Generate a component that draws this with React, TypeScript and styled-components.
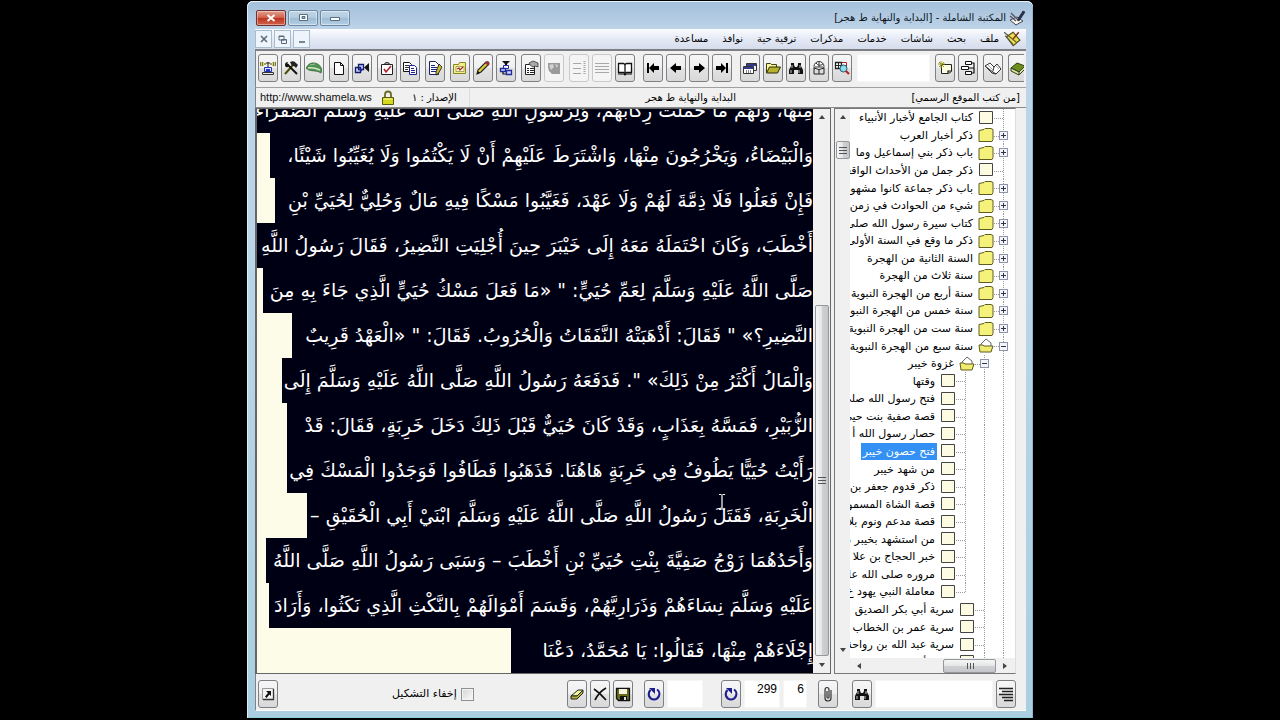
import React, { ReactNode } from 'react';
import styled, { createGlobalStyle, css } from 'styled-components';

const uiFont = '"DejaVu Sans", "Liberation Sans", sans-serif';

const GlobalStyle = createGlobalStyle`
  *, *::before, *::after { box-sizing: border-box; }
  body { margin: 0; background: #000; font-family: ${uiFont}; color: #000; }
  button, input { font: inherit; color: inherit; margin: 0; padding: 0; }
  ul { list-style: none; margin: 0; padding: 0; }
`;

/* ---------- icons ---------- */

const line = { fill: 'none', stroke: '#111', strokeWidth: 1.2 };

const glyphs: Record<string, ReactNode> = {
  antenna: (<>
    <path d="M1 2q-1 2 0 4M3 2q-1 2 0 4M13 2q1 2 0 4M15 2q1 2 0 4M5 3v2M11 3v2" fill="none" stroke="#77770a" strokeWidth="1.3" />
    <path d="M8 2v6M6 3h4" stroke="#222" fill="none" />
    <path d="M4.500 7.500h7v4h-7z" fill="#dfe8ff" stroke="#2430b0" /><path d="M6 9h4v2H6z" fill="#2233c8" />
    <path d="M2.500 12.500h11v2h-11z" fill="#eee" stroke="#333" />
  </>),
  tools: (<>
    <path d="M2 14L10 5" stroke="#77771a" strokeWidth="2.4" /><path d="M2 14L10 5" stroke="#111" strokeWidth=".8" />
    <path d="M7 2q4-2 6 1l2 2-2 3-2-2-2 0z" fill="#222" />
    <path d="M4 4l10 10" stroke="#111" strokeWidth="2" /><path d="M2 5q0-3 3-3l-1 2 2 1-1 2q-3 1-3-2" fill="#111" />
  </>),
  leaf: (<>
    <path d="M0 8q3-6 9-5 6 1 7 8l-1 2q-3-2-7-2-6 0-8-3z" fill="#4f9350" stroke="#2f5b30" strokeWidth=".6" />
    <path d="M2 8q5-1 12 2" stroke="#d5e8c8" fill="none" strokeWidth="1.400" />
    <path d="M4 5l5-1" stroke="#9cc48e" fill="none" />
  </>),
  page: <path d="M3.500 2.500h6l3 3v9h-9zM9.500 2.500v3h3" fill="#fff" stroke="#111" />,
  camera: (<>
    <path d="M1.500 7.500h5v5h-5zM4.500 4.500h5v5h-5z" fill="#c6ccff" stroke="#111a66" strokeWidth="1.3" />
    <path d="M15 3v9l-5-4.500z" fill="#111" /><path d="M5 9h4l-2 3z" fill="#2020a0" />
  </>),
  clipboard: (<>
    <path d="M2.500 4.500h11v10h-11z" fill="#fff" stroke="#222" /><path d="M5.500 4.500q0-2 2.500-2t2.500 2z" fill="#bbb" stroke="#222" />
    <path d="M5 9l2 3 5-6" fill="none" stroke="#b3202c" strokeWidth="1.600" />
  </>),
  copy: (<>
    <path d="M1.500 2.500h6l2 2v7h-8z" fill="#fff" stroke="#111" /><path d="M3 5.500h4M3 7.500h4M3 9.500h3" stroke="#333" />
    <path d="M7.500 5.500h5l2 2v7h-7z" fill="#fff" stroke="#1c2590" /><path d="M9 8.500h3M9 10.500h4M9 12.500h4" stroke="#1c2590" />
  </>),
  docedit: (<>
    <path d="M2.500 1.500h6l3 3v10h-9z" fill="#fff" stroke="#1a1f66" /><path d="M4 5.500h4M4 7.500h6M4 9.500h6M4 11.500h5" stroke="#1c2590" />
    <path d="M12 4l3 3-4 7-2 1 0-3z" fill="#cdbb28" stroke="#111" strokeWidth=".8" />
  </>),
  folderchart: (<>
    <path d="M1.500 4.500h5l1-2h6v11h-12z" fill="#f2f08c" stroke="#8a8420" /><path d="M4 6.500h8v5H4z" fill="#fffbe0" stroke="#777020" strokeWidth=".6" />
    <path d="M5 9l2-1 1 2 3-3" fill="none" stroke="#b02818" strokeWidth="1.300" />
  </>),
  pencil: (<>
    <path d="M2 14l1-4 8-8q3-1 3 2l-8 8z" fill="#d8d03a" stroke="#222" strokeWidth="1.100" />
    <path d="M10 3l3 3 1-2q0-3-3-2z" fill="#b02830" /><path d="M2 14l1-3 2 2z" fill="#111" />
  </>),
  nodes: (<>
    <path d="M4 1h8L9 4v2H7V4z" fill="#111" /><path d="M5.500 5.500h5v3h-5z" fill="#fff" stroke="#20289a" />
    <path d="M2.500 8.500h5v3h-5zM8.500 10.500h5v4h-5z" fill="#cfd6ff" stroke="#20289a" strokeWidth="1.300" /><path d="M5 12v2h3" {...line} />
  </>),
  props: (<>
    <path d="M2.500 4.500h9v10h-9z" fill="#fff" stroke="#222" /><path d="M4 8.500h2M7 8.500h4M4 10.500h2M7 10.500h4M4 12.500h2M7 12.500h4" stroke="#222" />
    <path d="M6 3l4-2 5 2v4l-3-1-2 1-3-2z" fill="#aaa" stroke="#333" strokeWidth=".8" />
  </>),
  globe: (<>
    <path d="M2 3h12v11H6l-3-3-1-4z" fill="#9a9a9a" /><path d="M3 5l4-1 1 3-3 3zM9 4l3 1-1 3z" fill="#d2d2d2" />
  </>),
  sortlines: (<>
    <path d="M2 3.500h8M2 8.500h8M2 13.500h8" stroke="#a6a6a6" /><path d="M13.500 1v14" stroke="#a6a6a6" strokeDasharray="1 1" strokeWidth="2" />
  </>),
  lines: <path d="M1 3.500h14M1 6.500h14M1 9.500h14M1 12.500h14" stroke="#a8a8a8" />,
  book: (<>
    <path d="M1.500 3.500h5l1.500 1 1.500-1h5v9h-5l-1.500 1-1.500-1h-5z" fill="#fff" stroke="#111" strokeWidth="1.300" /><path d="M8 4.500v9" stroke="#111" strokeWidth="1.300" />
    <path d="M1 14h6l1 1 1-1h6" {...line} />
  </>),
  first: <path d="M2 3h2v10H2zM4 8l5-5v3h5v4H9v3z" fill="#000" />,
  prev: <path d="M2 8l6-5v3h5v4H8v3z" fill="#000" />,
  next: <path d="M14 8L8 3v3H3v4h5v3z" fill="#000" />,
  last: <path d="M14 3h-2v10h2zM12 8L7 3v3H2v4h5v3z" fill="#000" />,
  windows: (<>
    <path d="M4.500 3.500h10v7h-10z" fill="#eee" stroke="#333" /><path d="M5 4h9v2H5z" fill="#333a8c" />
    <path d="M1.500 6.500h10v7h-10z" fill="#fff" stroke="#333" /><path d="M2 7h9v2H2z" fill="#333a8c" /><path d="M4.500 10v3M6.500 10v3M8.500 10v3" stroke="#888" />
  </>),
  openfolder: (<>
    <path d="M1.500 12.500v-9h4l1 1h5v3" fill="#f7f5a0" stroke="#3f3f10" /><path d="M1.500 13l3-6h11l-3 6z" fill="#b5b32c" stroke="#2a2a08" />
  </>),
  binoculars: (<>
    <path d="M3 3h3v2l1 2h2l1-2V3h3v3l2 4v4h-5v-4H6v4H1v-4l2-4z" fill="#111" />
    <path d="M4 5v3M3 10v3M12 5v3M11 10v3" stroke="#ddd" strokeWidth=".9" />
  </>),
  globebook: (<>
    <circle cx="8" cy="6.500" r="5" fill="#fff" stroke="#333" /><path d="M5 3q3 4 7 1M4 7h8M8 2v5" stroke="#333" fill="none" />
    <path d="M3 8l5 1.500L13 8v6H3z" fill="#ddd" stroke="#222" /><path d="M8 9v5" stroke="#222" />
  </>),
  searchdoc: (<>
    <path d="M1.500 2.500h6v6h-6z" fill="#fff" stroke="#222" strokeWidth="1.300" /><path d="M4.500 2v7M1 5.500h7" stroke="#222" />
    <path d="M7.500 2.500h5v4" fill="#fff" stroke="#b32020" /><circle cx="9.500" cy="8.500" r="3.500" fill="#8fdde6" stroke="#1c5c78" />
    <path d="M12 11l3 3" stroke="#c02020" strokeWidth="2.200" />
  </>),
  newwindow: (<>
    <path d="M4.500 4.500h10v7l-3 2h-7z" fill="#fffde0" stroke="#222" /><path d="M11 13v-2h3" {...line} />
    <path d="M4 1v7M1 4h7M2 2l5 5M7 2L2 7" stroke="#9a9a18" strokeWidth="1" />
  </>),
  hierarchy: (<>
    <path d="M5.500 1.500h6v3h-6zM1.500 6.500h7v3h-7zM5.500 11.500h6v3h-6z" fill="#fff" stroke="#111" /><path d="M12 3h2v10h-2M9 8h5" {...line} />
  </>),
  openbook: (<>
    <path d="M0 6l5-3 4 4 3-3 4 5-5 5-3-2z" fill="#fff" stroke="#333" /><path d="M0 6l7 7 4 1M9 7l-1 4" fill="none" stroke="#333" />
    <path d="M3 5l5 5M11 6l3 3" stroke="#aaa" />
  </>),
  greenbook: (<>
    <path d="M2 8l6-5 8 3-6 6z" fill="#6f8c1e" stroke="#2e3f08" /><path d="M2 8v3l8 4v-3zM10 15l6-6V6" fill="#dde2b0" stroke="#2e3f08" />
  </>),
  popup: (<>
    <path d="M2.500 2.500h11v11h-11z" fill="#f4f4f4" stroke="#999" /><path d="M13.500 3v10.500H3" fill="none" stroke="#333" strokeWidth="1.300" />
    <path d="M6 5h5v5L9.500 8.500 6.500 12 5 10.500 8 7z" fill="#111" />
  </>),
  eraser: (<>
    <path d="M2 10l7-6h5l-6 6z" fill="#f3f3a0" stroke="#222" /><path d="M2 10v3h6l6-6V4l-6 6z" fill="#b4b438" stroke="#222" />
  </>),
  cross: <path d="M2 3q6 4 12 11M14 2Q7 6 3 14" fill="none" stroke="#111" strokeWidth="1.700" />,
  floppy: (<>
    <path d="M1.500 2.500h13v12h-11l-2-2z" fill="#6b6b1c" stroke="#111" strokeWidth="1.300" /><path d="M4 3h8v5H4z" fill="#f3f3e0" /><path d="M5 10h7v4H5z" fill="#111" /><path d="M9 11h2v3H9z" fill="#ddd" />
  </>),
  undo: (<>
    <path d="M11 3.500q3.500 2.500 2 6.500-1.500 3.500-5 3.500T3 10q-1-3.500 1.500-6" fill="none" stroke="#1c1c8e" strokeWidth="2" /><path d="M3 2h6v6z" fill="#1c1c8e" />
  </>),
  clip: <path d="M11 4v8q0 3-3 3t-3-3V4q0-2.500 2-2.500T9 4v7q0 1-1 1t-1-1V5" fill="none" stroke="#333" strokeWidth="1.200" />,
  list: <path d="M1 2.500h14M4 5.500h11M1 8.500h14M4 11.500h11M6 14.500h9" stroke="#222" strokeWidth="1.300" />,
  folder: <path d="M1 3.500l5-1 1-1h6l2 1v10l-1 2H1z" fill="#f5f27c" stroke="#5e5c20" />,
  folderopen: (<>
    <path d="M3 6l5-5 5 4v4H3z" fill="#fff" stroke="#666" /><path d="M2 14L1 7h4l1 1h9l-2 6z" fill="#eeec6c" stroke="#5e5c20" />
  </>),
  leafnode: <path d="M1.500 1.500h13v12h-13z" fill="#fdfce2" stroke="#444" />,
  lock: (<>
    <path d="M5 7V4.500q0-3 3-3t3 3V7" fill="none" stroke="#6a6a20" strokeWidth="1.800" /><path d="M2.500 7.500h11v7h-11z" fill="#d6d81c" stroke="#5a5a10" /><path d="M4 9h8" stroke="#f6f79a" />
  </>),
  appwrite: (<>
    <path d="M1 10l7-3 6 4-7 4z" fill="#f6f6ec" stroke="#445" /><path d="M1 6l6 5M2 3l6 6" stroke="#556" strokeWidth="1.400" /><path d="M8 10l6-9 2 1-6 9z" fill="#26345c" stroke="#111" strokeWidth=".6" />
  </>),
  appyellow: (<>
    <path d="M3 6l6-4 6 7-6 5z" fill="#e9df4c" stroke="#544a10" /><path d="M1 2l11 9M2 5l7 8" stroke="#554" /><path d="M9 8l5-6" stroke="#8b2b10" strokeWidth="1.300" />
  </>),
};

const Svg = styled.svg<{ $size: number }>`
  display: block;
  flex: none;
  width: ${p => p.$size}px;
  height: ${p => p.$size}px;
`;

const Icon = ({ name, size = 16 }: { name: string; size?: number }) => (
  <Svg $size={size} viewBox="0 0 16 16" aria-hidden="true">{glyphs[name]}</Svg>
);

/* ---------- window frame ---------- */

const Desktop = styled.div`
  min-height: 100vh;
  padding: 1px 247px 2px;
  background: #000;
`;

const Window = styled.main`
  display: flex;
  flex-direction: column;
  height: calc(100vh - 3px);
  min-height: 480px;
  padding: 0 7px 7px 8px;
  border-radius: 6px 6px 0 0;
  background: linear-gradient(#a3bfda, #bdd3e8 28px, #b9d6e8 40%, #a9cfe0);
  box-shadow: inset 0 1px #e8f4fb, inset 1px 0 #dceefa, inset -1px 0 #8fb4cd, inset 0 -1px #8fd0dd;
`;

const TitleBar = styled.header`
  display: flex;
  align-items: center;
  height: 28px;
  flex: none;
  padding: 5px 1px 0;
`;

const CaptionButtons = styled.div`
  display: flex;
  gap: 2px;
  flex: 1;
`;

const CaptionButton = styled.button<{ $danger?: boolean }>`
  display: grid;
  place-items: center;
  width: 30px;
  height: 16px;
  border: 1px solid ${p => (p.$danger ? '#6d3030' : '#6d89a3')};
  border-radius: 2px;
  box-shadow: inset 0 0 0 1px rgba(255, 255, 255, 0.4);
  background: ${p => (p.$danger
    ? 'linear-gradient(#e2a08f, #cf5c48 50%, #bd3420 51%, #d2604a)'
    : 'linear-gradient(#c3d7e8, #b0cade 50%, #9cbbd3 51%, #b5cfe3)')};
`;

const Title = styled.h1`
  margin: 0 3px 0 0;
  font-size: 10px;
  line-height: 16px;
  font-weight: 400;
  color: #0c141c;
`;

const MenuBar = styled.nav`
  display: flex;
  align-items: center;
  height: 20px;
  flex: none;
  padding-right: 5px;
  background: linear-gradient(#fbfcfe, #e4e9f5 50%, #d6dcec);
`;

const ChildButtons = styled.div`
  display: flex;
  gap: 2px;
  flex: 1;
`;

const ChildButton = styled.button`
  display: grid;
  place-items: center;
  width: 17px;
  height: 18px;
  border: 1px solid #a9bccb;
  background: #eef4fb;
`;

const MenuList = styled.ul`
  display: flex;
  direction: rtl;
  gap: 14px;
  margin-right: 4px;
`;

const MenuLink = styled.a`
  display: block;
  font-size: 10px;
  line-height: 20px;
  color: #000;
  text-decoration: none;
  white-space: nowrap;
`;

const Client = styled.div`
  display: flex;
  flex-direction: column;
  flex: 1;
  min-height: 0;
  background: #f0f0f0;
`;

/* ---------- toolbar ---------- */

const Toolbar = styled.div`
  display: flex;
  align-items: center;
  gap: 5px;
  height: 39px;
  flex: none;
  padding: 0 2px 3px;
  border-top: 2px solid #7d7f82;
  border-bottom: 1px solid #a0a0a0;
  border-left: 1px solid #808488;
`;

const Group = styled.div<{ $apart?: boolean }>`
  display: flex;
  gap: 3px;
  margin-left: ${p => (p.$apart ? 3 : 0)}px;
`;

const ToolButton = styled.button<{ $faded?: boolean; $cut?: boolean }>`
  display: flex;
  align-items: center;
  justify-content: center;
  width: 20px;
  height: 28px;
  flex: none;
  border: 1px solid ${p => (p.$faded ? '#c9c9c9' : '#7c7f84')};
  border-radius: 3px;
  background: ${p => (p.$faded ? '#f4f4f4' : 'linear-gradient(#f6f6f6, #efefef 50%, #e2e2e2 51%, #d9d9d9)')};
  ${p => p.$cut && css`
    width: 16px;
    margin-left: 2px;
    border-right: 0;
    border-radius: 3px 0 0 3px;
    overflow: hidden;
    justify-content: flex-start;
  `}
`;

const Field = styled.input<{ $width?: number }>`
  ${p => (p.$width ? css`width: ${p.$width}px; flex: none;` : css`flex: 1; min-width: 0; width: 0;`)}
  height: 28px;
  padding: 0 2px 10px;
  border: 1px solid #f6f6f6;
  background: #fff;
  font: 12px/16px "Liberation Sans", sans-serif;
  text-align: right;
`;

const InfoBar = styled.div`
  display: grid;
  grid-template-columns: 210px 1fr auto;
  align-items: center;
  height: 19px;
  flex: none;
  padding: 0 6px 0 4px;
  font-size: 10px;
  line-height: 17px;
  border-left: 1px solid #808488;
  white-space: nowrap;
`;

const SiteInfo = styled.div`
  display: flex;
  align-items: center;
  height: 19px;
  border-right: 1px solid #dedede;
`;

const SiteLink = styled.a`
  font: 11px/17px "Liberation Sans", sans-serif;
  color: #111;
  text-decoration: none;
  margin-right: 8px;
`;

const Edition = styled.span`
  margin-left: 16px;
`;

const BookName = styled.strong`
  text-align: center;
  font-weight: 400;
`;

const Source = styled.span`
  justify-self: end;
`;

/* ---------- reader ---------- */

const Panes = styled.div`
  display: flex;
  gap: 3px;
  flex: 1;
  min-height: 0;
  padding-right: 10px;
  border-top: 1px solid #8a8a8a;
`;

const ReaderPane = styled.section`
  display: flex;
  flex: 1;
  min-width: 0;
  border: 1px solid #666;
  border-left-width: 2px;
`;

const Reader = styled.article`
  position: relative;
  display: flex;
  flex-direction: column;
  justify-content: flex-end;
  flex: 1;
  min-width: 0;
  overflow: hidden;
  direction: rtl;
  background: #fdfce8;
`;

const Line = styled.p<{ $inset: number }>`
  margin: 0 0 0 ${p => p.$inset}px;
  height: 45px;
  flex: none;
  background: #000014;
  color: #fff;
  font-family: "DejaVu Sans", sans-serif;
  font-size: 19px;
  line-height: 45px;
  white-space: nowrap;
`;

const Caret = styled.svg`
  position: absolute;
  top: 68%;
  left: 83%;
  width: 8px;
  height: 18px;
`;

const readerLines: [number, string][] = [
  [0, 'مِنْهَا، وَلَهُمْ مَا حَمَلَتْ رِكَابُهُمْ، وَلِرَسُولِ اللَّهِ صَلَّى اللَّهُ عَلَيْهِ وَسَلَّمَ الصَّفْرَاءُ'],
  [13, 'وَالْبَيْضَاءُ، وَيَخْرُجُونَ مِنْهَا، وَاشْتَرَطَ عَلَيْهِمْ أَنْ لَا يَكْتُمُوا وَلَا يُغَيِّبُوا شَيْئًا،'],
  [18, 'فَإِنْ فَعَلُوا فَلَا ذِمَّةَ لَهُمْ وَلَا عَهْدَ، فَغَيَّبُوا مَسْكًا فِيهِ مَالٌ وَحُلِيٌّ لِحُيَيِّ بْنِ'],
  [0, 'أَخْطَبَ، وَكَانَ احْتَمَلَهُ مَعَهُ إِلَى خَيْبَرَ حِينَ أُجْلِيَتِ النَّضِيرُ، فَقَالَ رَسُولُ اللَّهِ'],
  [6, 'صَلَّى اللَّهُ عَلَيْهِ وَسَلَّمَ لِعَمِّ حُيَيٍّ: " «مَا فَعَلَ مَسْكُ حُيَيٍّ الَّذِي جَاءَ بِهِ مِنَ'],
  [35, 'النَّضِيرِ؟» " فَقَالَ: أَذْهَبَتْهُ النَّفَقَاتُ وَالْحُرُوبُ. فَقَالَ: " «الْعَهْدُ قَرِيبٌ'],
  [25, 'وَالْمَالُ أَكْثَرُ مِنْ ذَلِكَ» ". فَدَفَعَهُ رَسُولُ اللَّهِ صَلَّى اللَّهُ عَلَيْهِ وَسَلَّمَ إِلَى'],
  [30, 'الزُّبَيْرِ، فَمَسَّهُ بِعَذَابٍ، وَقَدْ كَانَ حُيَيٌّ قَبْلَ ذَلِكَ دَخَلَ خَرِبَةٍ، فَقَالَ: قَدْ'],
  [30, 'رَأَيْتُ حُيَيًّا يَطُوفُ فِي خَرِبَةٍ هَاهُنَا. فَذَهَبُوا فَطَافُوا فَوَجَدُوا الْمَسْكَ فِي'],
  [50, 'الْخَرِبَةِ، فَقَتَلَ رَسُولُ اللَّهِ صَلَّى اللَّهُ عَلَيْهِ وَسَلَّمَ ابْنَيْ أَبِي الْحُقَيْقِ –'],
  [9, 'وَأَحَدُهُمَا زَوْجُ صَفِيَّةَ بِنْتِ حُيَيِّ بْنِ أَخْطَبَ – وَسَبَى رَسُولُ اللَّهِ صَلَّى اللَّهُ'],
  [12, 'عَلَيْهِ وَسَلَّمَ نِسَاءَهُمْ وَذَرَارِيَّهُمْ، وَقَسَمَ أَمْوَالَهُمْ بِالنَّكْثِ الَّذِي نَكَثُوا، وَأَرَادَ'],
  [254, 'إِجْلَاءَهُمْ مِنْهَا، فَقَالُوا: يَا مُحَمَّدُ، دَعْنَا'],
];

/* ---------- scroll bars ---------- */

const VTrack = styled.div<{ $width: number }>`
  display: flex;
  flex-direction: column;
  align-items: center;
  width: ${p => p.$width}px;
  flex: none;
  padding: 4px 0;
  background: #f0f0f0;
`;

const Spacer = styled.div<{ $grow: number }>`
  flex: ${p => p.$grow};
`;

const VThumb = styled.div<{ $grow?: number }>`
  display: grid;
  place-items: center;
  width: 14px;
  ${p => (p.$grow ? css`flex: ${p.$grow};` : css`height: 18px; flex: none;`)}
  border: 1px solid #94979b;
  border-radius: 2px;
  background: linear-gradient(90deg, #f5f5f5, #e4e5e6 50%, #cfd1d3 51%, #c4c7ca);
`;

const HTrack = styled.div`
  display: flex;
  align-items: center;
  height: 15px;
  flex: none;
  padding: 0 6px;
  background: #f0f0f0;
`;

const HThumb = styled.div`
  display: grid;
  place-items: center;
  width: 53px;
  height: 14px;
  border: 1px solid #94979b;
  border-radius: 2px;
  background: linear-gradient(#f5f5f5, #e4e5e6 50%, #cfd1d3 51%, #c4c7ca);
`;

const arrows = {
  up: 'M1 6L4 2l3 4z',
  down: 'M1 2l3 4 3-4z',
  left: 'M6 1L2 4l4 3z',
  right: 'M2 1l4 3-4 3z',
};

const Arrow = ({ dir }: { dir: keyof typeof arrows }) => (
  <Svg $size={8} viewBox="0 0 8 8" aria-hidden="true"><path d={arrows[dir]} fill="#444" /></Svg>
);

const Grip = ({ turned }: { turned?: boolean }) => (
  <Svg $size={8} viewBox="0 0 8 8" aria-hidden="true">
    <path d={turned ? 'M1.500 1v6M4.500 1v6M7.500 1v6' : 'M0 1.500h8M0 4.500h8M0 7.500h8'} stroke="#555" />
  </Svg>
);

/* ---------- contents tree ---------- */

const TreePane = styled.aside`
  display: flex;
  flex-direction: column;
  width: 182px;
  flex: none;
  border: 1px solid #777;
  border-right-color: #ddd;
`;

const TreeBody = styled.div`
  display: flex;
  flex: 1;
  min-height: 0;
`;

const TreeView = styled.div`
  flex: 1;
  min-width: 0;
  overflow: hidden;
  direction: rtl;
  background: #fff;
`;

const TreeList = styled.ul`
  display: grid;
  grid-template-rows: repeat(32, 1fr);
  height: 562px;
  padding-right: 2px;
`;

const TreeRow = styled.li`
  display: flex;
  align-items: center;
  min-height: 0;
  overflow: hidden;
`;

const dotsDown = 'repeating-linear-gradient(#9a9a9a 0 1px, transparent 1px 2px)';
const dotsAcross = 'repeating-linear-gradient(90deg, #9a9a9a 0 1px, transparent 1px 2px)';

const Guide = styled.span<{ $branch?: boolean; $ends?: boolean }>`
  display: grid;
  place-items: center;
  align-self: stretch;
  width: 19px;
  flex: none;
  background:
    ${dotsDown} 9px 0 / 1px ${p => (p.$ends ? '50%' : '100%')} no-repeat
    ${p => p.$branch && css`, ${dotsAcross} 0 9px / 9px 1px no-repeat`};
`;

const Expander = styled.button`
  display: grid;
  place-items: center;
  width: 9px;
  height: 9px;
  border: 1px solid #8d93a8;
  background: #f4f5fa;
`;

const RowLabel = styled.a<{ $active?: boolean }>`
  margin-right: 3px;
  padding: 0 2px;
  font-size: 11px;
  line-height: 17px;
  color: ${p => (p.$active ? '#fff' : '#000')};
  background: ${p => (p.$active ? '#3391f5' : 'none')};
  text-decoration: none;
  white-space: nowrap;
`;

type Node = { level: 0 | 1 | 2; label: string; kind: 'leaf' | 'closed' | 'open'; active?: boolean; ends?: boolean };

const nodes: Node[] = [
  { level: 0, kind: 'leaf', label: 'كتاب الجامع لأخبار الأنبياء' },
  { level: 0, kind: 'closed', label: 'ذكر أخبار العرب' },
  { level: 0, kind: 'closed', label: 'باب ذكر بني إسماعيل وما' },
  { level: 0, kind: 'leaf', label: 'ذكر جمل من الأحداث الواقعة' },
  { level: 0, kind: 'closed', label: 'باب ذكر جماعة كانوا مشهورين' },
  { level: 0, kind: 'closed', label: 'شيء من الحوادث في زمن' },
  { level: 0, kind: 'closed', label: 'كتاب سيرة رسول الله صلى' },
  { level: 0, kind: 'closed', label: 'ذكر ما وقع في السنة الأولى' },
  { level: 0, kind: 'closed', label: 'السنة الثانية من الهجرة' },
  { level: 0, kind: 'closed', label: 'سنة ثلاث من الهجرة' },
  { level: 0, kind: 'closed', label: 'سنة أربع من الهجرة النبوية' },
  { level: 0, kind: 'closed', label: 'سنة خمس من الهجرة النبوية' },
  { level: 0, kind: 'closed', label: 'سنة ست من الهجرة النبوية' },
  { level: 0, kind: 'open', label: 'سنة سبع من الهجرة النبوية' },
  { level: 1, kind: 'open', label: 'غزوة خيبر' },
  { level: 2, kind: 'leaf', label: 'وقتها' },
  { level: 2, kind: 'leaf', label: 'فتح رسول الله صلى' },
  { level: 2, kind: 'leaf', label: 'قصة صفية بنت حيي' },
  { level: 2, kind: 'leaf', label: 'حصار رسول الله أ' },
  { level: 2, kind: 'leaf', label: 'فتح حصون خيبر', active: true },
  { level: 2, kind: 'leaf', label: 'من شهد خيبر' },
  { level: 2, kind: 'leaf', label: 'ذكر قدوم جعفر بن' },
  { level: 2, kind: 'leaf', label: 'قصة الشاة المسمو' },
  { level: 2, kind: 'leaf', label: 'قصة مدعم ونوم بلا' },
  { level: 2, kind: 'leaf', label: 'من استشهد بخيبر م' },
  { level: 2, kind: 'leaf', label: 'خبر الحجاج بن علا' },
  { level: 2, kind: 'leaf', label: 'مروره صلى الله علي' },
  { level: 2, kind: 'leaf', label: 'معاملة النبي يهود خ', ends: true },
  { level: 1, kind: 'leaf', label: 'سرية أبي بكر الصديق' },
  { level: 1, kind: 'leaf', label: 'سرية عمر بن الخطاب ر' },
  { level: 1, kind: 'leaf', label: 'سرية عبد الله بن رواحة' },
  { level: 1, kind: 'leaf', label: 'سرية أخرى مع بشير' },
];

const nodeIcon = { leaf: 'leafnode', closed: 'folder', open: 'folderopen' };

const TreeNode = ({ node }: { node: Node }) => (
  <TreeRow>
    {Array.from({ length: node.level }, (_, i) => <Guide key={i} />)}
    <Guide $branch $ends={node.ends}>
      {node.kind !== 'leaf' && (
        <Expander aria-label={node.kind === 'open' ? 'طي' : 'توسيع'}>
          <Svg $size={7} viewBox="0 0 7 7" aria-hidden="true">
            <path d={node.kind === 'open' ? 'M1 3.500h5' : 'M1 3.500h5M3.500 1v5'} stroke="#334" />
          </Svg>
        </Expander>
      )}
    </Guide>
    <Icon name={nodeIcon[node.kind]} />
    <RowLabel href="#" $active={node.active}>{node.label}</RowLabel>
  </TreeRow>
);

/* ---------- bottom bar ---------- */

const BottomBar = styled.footer`
  display: flex;
  align-items: center;
  gap: 3px;
  height: 37px;
  flex: none;
  padding: 4px 10px 0 2px;
  border-left: 1px solid #808488;
  border-bottom: 1px solid #fff;
`;

const Gap = styled.div<{ $width?: number }>`
  ${p => (p.$width ? css`width: ${p.$width}px; flex: none;` : css`flex: 1;`)}
`;

const HideMarks = styled.label`
  display: flex;
  align-items: center;
  gap: 4px;
  font-size: 11px;
  line-height: 16px;
  white-space: nowrap;
`;

const Tick = styled.input`
  appearance: none;
  width: 13px;
  height: 13px;
  border: 1px solid #8e8f8f;
  background: linear-gradient(135deg, #d5d5d5, #fafafa);
  box-shadow: inset 0 0 0 1px #f4f4f4;
`;

const menus = ['ملف', 'بحث', 'شاشات', 'خدمات', 'مذكرات', 'ترقية حية', 'نوافذ', 'مساعدة'];

const toolGroups: { apart?: boolean; items: [string, string, boolean?][] }[] = [
  { items: [['antenna', 'بث'], ['tools', 'خيارات'], ['leaf', 'ترقية']] },
  { items: [['page', 'جديد'], ['camera', 'ربط']] },
  { items: [['clipboard', 'تحديد'], ['copy', 'نسخ']] },
  { items: [['docedit', 'تحرير']] },
  { items: [['folderchart', 'مجلد'], ['pencil', 'قلم'], ['nodes', 'شجرة']] },
  { items: [['props', 'خصائص'], ['globe', 'ويب', true]] },
  { items: [['sortlines', 'ترتيب', true], ['lines', 'أسطر', true], ['book', 'كتاب']] },
  { apart: true, items: [['first', 'الأول'], ['prev', 'السابق'], ['next', 'التالي'], ['last', 'الأخير']] },
  { apart: true, items: [['windows', 'نوافذ'], ['openfolder', 'فتح'], ['binoculars', 'بحث'], ['globebook', 'تراجم'], ['searchdoc', 'بحث في الصفحة']] },
];

export default function App() {
  return (
    <>
      <GlobalStyle />
      <Desktop>
        <Window>
          <TitleBar>
            <CaptionButtons>
              <CaptionButton $danger aria-label="إغلاق">
                <svg width="10" height="8" viewBox="0 0 10 8"><path d="M1.500 1l7 6M8.500 1l-7 6" stroke="#fff" strokeWidth="2" /></svg>
              </CaptionButton>
              <CaptionButton aria-label="تكبير">
                <svg width="11" height="9" viewBox="0 0 11 9"><path d="M1.500 1.500h8v6h-8z" fill="#fff" stroke="#566c80" /><path d="M4 3.500h3v2H4z" fill="#8ba" stroke="#566c80" /></svg>
              </CaptionButton>
              <CaptionButton aria-label="تصغير">
                <svg width="12" height="8" viewBox="0 0 12 8"><path d="M1.500 3.500h9v3h-9z" fill="#fff" stroke="#566c80" /></svg>
              </CaptionButton>
            </CaptionButtons>
            <Title dir="rtl">المكتبة الشاملة - [البداية والنهاية ط هجر]</Title>
            <Icon name="appwrite" />
          </TitleBar>
          <MenuBar>
            <ChildButtons>
              <ChildButton aria-label="إغلاق الكتاب">
                <svg width="8" height="8" viewBox="0 0 8 8"><path d="M1 1l6 6M7 1L1 7" stroke="#5a6a78" strokeWidth="1.600" /></svg>
              </ChildButton>
              <ChildButton aria-label="استعادة">
                <svg width="9" height="9" viewBox="0 0 9 9"><path d="M1 1h5v4H1zM3.500 4.500h5v4h-5z" fill="#eef4fb" stroke="#5a6a78" /><path d="M1 1.500h5M3.500 5h5" stroke="#5a6a78" /></svg>
              </ChildButton>
              <ChildButton aria-label="تصغير الكتاب">
                <svg width="8" height="8" viewBox="0 0 8 8"><path d="M1 7h6" stroke="#5a6a78" strokeWidth="1.600" /></svg>
              </ChildButton>
            </ChildButtons>
            <MenuList>
              {menus.map(m => <li key={m}><MenuLink href="#">{m}</MenuLink></li>)}
            </MenuList>
            <Icon name="appyellow" size={18} />
          </MenuBar>
          <Client>
            <Toolbar>
              {toolGroups.map((g, i) => (
                <Group key={i} $apart={g.apart}>
                  {g.items.map(([icon, label, faded]) => (
                    <ToolButton key={icon} $faded={faded} aria-label={label}><Icon name={icon} /></ToolButton>
                  ))}
                </Group>
              ))}
              <Field aria-label="بحث سريع" />
              <Group>
                <ToolButton aria-label="نافذة جديدة"><Icon name="newwindow" /></ToolButton>
                <ToolButton aria-label="الفهرس"><Icon name="hierarchy" /></ToolButton>
              </Group>
              <Group>
                <ToolButton aria-label="فتح كتاب"><Icon name="openbook" /></ToolButton>
                <ToolButton $cut aria-label="المكتبة"><Icon name="greenbook" /></ToolButton>
              </Group>
            </Toolbar>
            <InfoBar>
              <SiteInfo>
                <SiteLink href="#">http://www.shamela.ws</SiteLink>
                <Icon name="lock" />
                <Edition dir="rtl">الإصدار : ١</Edition>
              </SiteInfo>
              <BookName dir="rtl">البداية والنهاية ط هجر</BookName>
              <Source dir="rtl">[من كتب الموقع الرسمي]</Source>
            </InfoBar>
            <Panes>
              <ReaderPane>
                <Reader>
                  {readerLines.map(([inset, text], i) => <Line key={i} $inset={inset}>{text}</Line>)}
                  <Caret viewBox="0 0 8 18" aria-hidden="true">
                    <path d="M1 1.500h2.500M4.500 1.500H7M4 2v14M1 16.500h2.500M4.500 16.500H7" stroke="#fff" strokeWidth="1.200" fill="none" />
                  </Caret>
                </Reader>
                <VTrack $width={17}>
                  <Arrow dir="up" />
                  <Spacer $grow={184} />
                  <VThumb $grow={350}><Grip /></VThumb>
                  <Spacer $grow={5} />
                  <Arrow dir="down" />
                </VTrack>
              </ReaderPane>
              <TreePane>
                <TreeBody>
                  <VTrack $width={15}>
                    <Arrow dir="up" />
                    <Spacer $grow={20} />
                    <VThumb><Grip /></VThumb>
                    <Spacer $grow={484} />
                    <Arrow dir="down" />
                  </VTrack>
                  <TreeView>
                    <TreeList>
                      {nodes.map((n, i) => <TreeNode key={i} node={n} />)}
                    </TreeList>
                  </TreeView>
                </TreeBody>
                <HTrack>
                  <Gap $width={14} />
                  <Arrow dir="left" />
                  <Gap />
                  <HThumb><Grip turned /></HThumb>
                  <Gap $width={5} />
                  <Arrow dir="right" />
                </HTrack>
              </TreePane>
            </Panes>
            <BottomBar>
              <ToolButton aria-label="نافذة منبثقة"><Icon name="popup" /></ToolButton>
              <Gap $width={108} />
              <HideMarks>
                <span dir="rtl">إخفاء التشكيل</span>
                <Tick type="checkbox" />
              </HideMarks>
              <Gap />
              <ToolButton aria-label="مسح"><Icon name="eraser" /></ToolButton>
              <ToolButton aria-label="حذف"><Icon name="cross" /></ToolButton>
              <ToolButton aria-label="حفظ"><Icon name="floppy" /></ToolButton>
              <Gap $width={5} />
              <ToolButton aria-label="رجوع"><Icon name="undo" /></ToolButton>
              <Field $width={36} aria-label="رقم" />
              <Gap $width={12} />
              <ToolButton aria-label="انتقال"><Icon name="undo" /></ToolButton>
              <Field $width={36} aria-label="الصفحة" defaultValue="299" />
              <Field $width={24} aria-label="الجزء" defaultValue="6" />
              <Gap $width={5} />
              <ToolButton aria-label="مرفق"><Icon name="clip" /></ToolButton>
              <Gap $width={8} />
              <ToolButton aria-label="بحث في الفهرس"><Icon name="binoculars" /></ToolButton>
              <Field $width={118} aria-label="نص البحث" />
              <ToolButton aria-label="قائمة"><Icon name="list" /></ToolButton>
            </BottomBar>
          </Client>
        </Window>
      </Desktop>
    </>
  );
}
